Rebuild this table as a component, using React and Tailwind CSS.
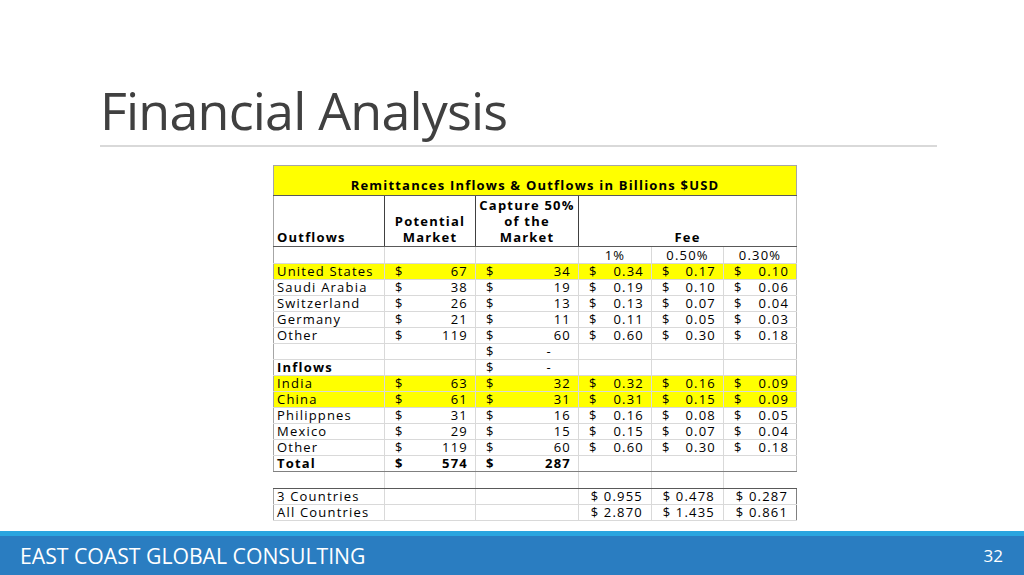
import React from "react";

const outflows = [
  ["United States", "67", "34", "0.34", "0.17", "0.10", true],
  ["Saudi Arabia", "38", "19", "0.19", "0.10", "0.06", false],
  ["Switzerland", "26", "13", "0.13", "0.07", "0.04", false],
  ["Germany", "21", "11", "0.11", "0.05", "0.03", false],
  ["Other", "119", "60", "0.60", "0.30", "0.18", false],
];
const inflows = [
  ["India", "63", "32", "0.32", "0.16", "0.09", true],
  ["China", "61", "31", "0.31", "0.15", "0.09", true],
  ["Philippnes", "31", "16", "0.16", "0.08", "0.05", false],
  ["Mexico", "29", "15", "0.15", "0.07", "0.04", false],
  ["Other", "119", "60", "0.60", "0.30", "0.18", false],
];

const td = "h-[15px] p-0 border border-[#d9d9d9] align-middle";

function Money({ v, bold }) {
  return (
    <div className={"flex justify-between pl-[10px] pr-[7px] " + (bold ? "font-bold" : "")}>
      <span>$</span>
      <span>{v}</span>
    </div>
  );
}

function DataRow({ r }) {
  const [name, a, b, c, d, e, yellow] = r;
  return (
    <tr className={yellow ? "bg-[#ffff00]" : ""}>
      <td className={td + " pl-[3px] border-l-[#a6a6a6]"}>{name}</td>
      <td className={td}><Money v={a} /></td>
      <td className={td}><Money v={b} /></td>
      <td className={td}><Money v={c} /></td>
      <td className={td}><Money v={d} /></td>
      <td className={td + " border-r-[#bfbfbf]"}><Money v={e} /></td>
    </tr>
  );
}

function DashRow({ label }) {
  return (
    <tr>
      <td className={td + " pl-[3px] font-bold border-l-[#a6a6a6]"}>{label}</td>
      <td className={td}></td>
      <td className={td}>
        <div className="flex justify-between pl-[10px] pr-[26px]">
          <span>$</span>
          <span>-</span>
        </div>
      </td>
      <td className={td}></td>
      <td className={td}></td>
      <td className={td + " border-r-[#bfbfbf]"}></td>
    </tr>
  );
}

export default function App() {
  return (
    <div
      className="w-[1024px] h-[575px] bg-white flex flex-col overflow-hidden"
      style={{ fontFamily: "'Open Sans', sans-serif" }}
    >
      <div className="pl-[100px] pt-[80px]">
        <h1 className="text-[52px] leading-[60px] text-[#404040] tracking-[-0.8px]">Financial Analysis</h1>
      </div>
      <div className="ml-[100px] w-[837px] h-[2px] bg-[#d9d9d9] mt-[5px]" />
      <div className="ml-[273px] mt-[18px]">
        <table className="border-collapse table-fixed w-[523px] text-[13px] leading-[15px] tracking-[1.2px] text-black">
          <colgroup>
            <col className="w-[111px]" />
            <col className="w-[91px]" />
            <col className="w-[103px]" />
            <col className="w-[73px]" />
            <col className="w-[72px]" />
            <col className="w-[73px]" />
          </colgroup>
          <tbody>
            <tr className="bg-[#ffff00]">
              <td colSpan={6} className="h-[30px] p-0 pb-[2px] border border-[#a6a6a6] border-b-[#595959] text-center align-bottom font-bold">
                Remittances Inflows &amp; Outflows in Billions $USD
              </td>
            </tr>
            <tr>
              <td className="h-[51px] p-0 pl-[3px] pb-[1px] border border-[#a6a6a6] border-r-[#404040] border-b-[#595959] align-bottom font-bold leading-[16px]">Outflows</td>
              <td className="p-0 pb-[1px] border border-[#404040] border-b-[#595959] align-bottom text-center font-bold leading-[16px]">Potential<br />Market</td>
              <td className="p-0 pb-[1px] border border-[#404040] border-b-[#595959] align-bottom text-center font-bold leading-[16px]">Capture 50%<br />of the<br />Market</td>
              <td colSpan={3} className="p-0 pb-[1px] border border-[#404040] border-r-[#bfbfbf] border-b-[#595959] align-bottom text-center font-bold leading-[16px]">Fee</td>
            </tr>
            <tr>
              <td className={td + " h-[17px] border-l-[#a6a6a6]"}></td>
              <td className={td}></td>
              <td className={td}></td>
              <td className={td + " text-center"}>1%</td>
              <td className={td + " text-center"}>0.50%</td>
              <td className={td + " text-center border-r-[#bfbfbf]"}>0.30%</td>
            </tr>
            {outflows.map((r, i) => <DataRow key={"o" + i} r={r} />)}
            <DashRow label="" />
            <DashRow label="Inflows" />
            {inflows.map((r, i) => <DataRow key={"i" + i} r={r} />)}
            <tr>
              <td className={td + " pl-[3px] font-bold border-l-[#a6a6a6] border-b-[#808080]"}>Total</td>
              <td className={td + " border-b-[#808080]"}><Money v="574" bold /></td>
              <td className={td + " border-b-[#808080]"}><Money v="287" bold /></td>
              <td className={td + " border-b-[#808080]"}></td>
              <td className={td + " border-b-[#808080]"}></td>
              <td className={td + " border-b-[#808080] border-r-[#bfbfbf]"}></td>
            </tr>
            <tr>
              <td className={td + " h-[17px] border-l-white border-b-[#595959]"}></td>
              <td className={td + " border-b-[#595959]"}></td>
              <td className={td + " border-b-[#595959]"}></td>
              <td className={td + " border-b-[#595959]"}></td>
              <td className={td + " border-b-[#595959]"}></td>
              <td className={td + " border-r-white border-b-[#595959]"}></td>
            </tr>
            <tr>
              <td className={td + " pl-[3px] border-l-[#a6a6a6]"}>3 Countries</td>
              <td className={td}></td>
              <td className={td}></td>
              <td className={td + " text-right pr-[8px]"}>$ 0.955</td>
              <td className={td + " text-right pr-[8px]"}>$ 0.478</td>
              <td className={td + " text-right pr-[8px] border-r-[#808080]"}>$ 0.287</td>
            </tr>
            <tr>
              <td className={td + " pl-[3px] border-l-[#a6a6a6]"}>All Countries</td>
              <td className={td}></td>
              <td className={td}></td>
              <td className={td + " text-right pr-[8px]"}>$ 2.870</td>
              <td className={td + " text-right pr-[8px]"}>$ 1.435</td>
              <td className={td + " text-right pr-[8px] border-r-[#808080]"}>$ 0.861</td>
            </tr>
          </tbody>
        </table>
      </div>
      <div className="mt-auto">
        <div className="h-[5px] bg-[#2aa5df]" />
        <div className="h-[39px] bg-[#2a7dc1] flex items-center justify-between pl-[20px] pr-[21px] text-white">
          <span className="text-[21.2px] leading-[28px]">EAST COAST GLOBAL CONSULTING</span>
          <span className="text-[17px] leading-[24px]">32</span>
        </div>
      </div>
    </div>
  );
}
